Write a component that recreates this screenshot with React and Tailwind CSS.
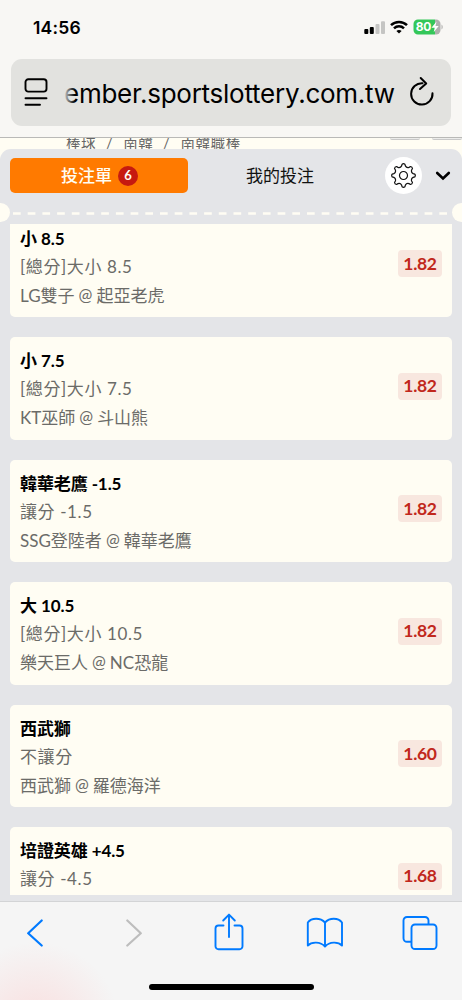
const bets = [
  { pick: '小 8.5', market: '[總分]大小 8.5', home: 'LG雙子', away: '起亞老虎', odds: '1.82' },
  { pick: '小 7.5', market: '[總分]大小 7.5', home: 'KT巫師', away: '斗山熊', odds: '1.82' },
  { pick: '韓華老鷹 -1.5', market: '讓分 -1.5', home: 'SSG登陸者', away: '韓華老鷹', odds: '1.82' },
  { pick: '大 10.5', market: '[總分]大小 10.5', home: '樂天巨人', away: 'NC恐龍', odds: '1.82' },
  { pick: '西武獅', market: '不讓分', home: '西武獅', away: '羅德海洋', odds: '1.60' },
  { pick: '培證英雄 +4.5', market: '讓分 -4.5', home: '', away: '', odds: '1.68' },
]

// 8-tooth cog outline around 0,0
function gearPath(teeth = 8) {
  const pt = (r, deg) => {
    const a = (deg * Math.PI) / 180
    return `${(r * Math.sin(a)).toFixed(2)} ${(-r * Math.cos(a)).toFixed(2)}`
  }
  const step = 360 / teeth
  let d = `M${pt(11.4, -7)}`
  for (let i = 0; i < teeth; i++) {
    const a = i * step
    d += ` Q${pt(12.3, a)} ${pt(11.4, a + 7)}`
    d += ` L${pt(9.8, a + 11)} Q${pt(8, a + step / 2)} ${pt(9.8, a + step - 11)}`
    d += ` L${pt(11.4, a + step - 7)}`
  }
  return d + 'Z'
}

function StatusBar() {
  return (
    <div className="flex h-[59px] items-start justify-between pl-[33px] pr-[18px]">
      <span className="mt-[16px] text-[17.5px] leading-[24px] font-semibold tracking-[0.2px] text-black">14:56</span>
      <div className="mt-[19px] flex items-center">
        <svg width="22" height="16" viewBox="0 0 22 16">
          <rect x="0.3" y="10" width="4" height="5" rx="1" fill="#000" />
          <rect x="5.8" y="8" width="4" height="7" rx="1" fill="#000" />
          <rect x="11.5" y="5" width="4" height="10" rx="1" fill="#c5c5c3" />
          <rect x="17" y="2.2" width="4" height="12.8" rx="1" fill="#c5c5c3" />
        </svg>
        <svg width="18" height="14" viewBox="0 0 18 14" className="ml-[4px]">
          <g fill="none" stroke="#000" strokeWidth="2.5">
            <path d="M1 5.2C5.4.9 12.6.9 17 5.2" />
            <path d="M4 8.3c2.8-2.7 7.2-2.7 10 0" />
          </g>
          <path d="M9 13.4 6.4 10.9c1.4-1.3 3.8-1.3 5.2 0z" fill="#000" />
        </svg>
        <svg width="31" height="16" viewBox="0 0 31 16" className="ml-[5px]">
          <path d="M5 .5h17v15H5A4.5 4.5 0 0 1 .5 11V5A4.5 4.5 0 0 1 5 .5z" fill="#34c759" />
          <path d="M22 .5h1A4.500 4.500 0 0 1 27.500 5v6a4.500 4.500 0 0 1-4.500 4.500h-1z" fill="#b0b0ae" />
          <path d="M28.500 5.500c1.600.8 1.600 4.200 0 5z" fill="#b0b0ae" />
          <text x="2.800" y="12.400" fontSize="12" fontWeight="700" fill="#fff" textLength="15.500">80</text>
          <path d="M23.500 2.500 18.500 8.800h3.200L20.700 13.300l5-6.300h-3.200z" fill="#fff" />
        </svg>
      </div>
    </div>
  )
}

function AddressBar() {
  return (
    <div className="mx-[11px] flex h-[67px] items-center rounded-[11px] bg-[#e2e2df]">
      <svg width="24" height="28" viewBox="0 0 24 28" fill="none" stroke="#000" strokeWidth="1.900" strokeLinecap="round" className="-mt-[1px] ml-[13px] shrink-0">
        <rect x="1.500" y="1.300" width="21" height="12.300" rx="2.800" />
        <path d="M1.500 20.200h21M1.500 26.700h14.500" />
      </svg>
      <div className="relative mt-[2px] ml-[6px] w-[346px] shrink-0 overflow-hidden pl-[10px] text-[26px] leading-[40px] tracking-[-0.25px] whitespace-nowrap text-black">
        ember.sportslottery.com.tw
        <div className="absolute inset-y-0 left-[9px] w-[12px] bg-gradient-to-r from-[#e2e2df] to-[#e2e2df]/0" />
      </div>
      <svg width="26" height="30" viewBox="0 0 26 30" fill="none" stroke="#000" strokeWidth="2" strokeLinecap="round" strokeLinejoin="round" className="-mt-[3px] ml-[9px] shrink-0">
        <path d="M13.500 7.200A10.700 10.700 0 1 0 23.500 17.200" />
        <path d="M11.700 2 17.200 7.500 11 13" />
      </svg>
    </div>
  )
}

function Breadcrumb() {
  return (
    <div className="flex h-[11px] items-start justify-between overflow-hidden bg-[#fffdf3]">
      <div className="-mt-[6px] ml-[66px] flex text-[14.500px] leading-[22px] tracking-[0.6px] text-[#666]">
        <span>棒球</span>
        <span className="w-[27px] text-center">/</span>
        <span>南韓</span>
        <span className="w-[27px] text-center">/</span>
        <span>南韓職棒</span>
      </div>
      <div className="flex gap-[12px]">
        <div className="h-[2px] w-[30px] rounded-b-[4px] border-b border-[#c9c9c9] bg-[#ececea]" />
        <div className="h-[2px] w-[30px] rounded-b-[4px] border-b border-[#c9c9c9] bg-[#ececea]" />
      </div>
    </div>
  )
}

function SlipTabs() {
  return (
    <div className="flex h-[53px] items-center pl-[10px]">
      <div className="flex h-[35px] w-[178px] items-center justify-center gap-[6px] rounded-[5px] bg-[#ff7a00] pl-[1px]">
        <span className="text-[17px] font-medium text-[#fffdf3]">投注單</span>
        <span className="flex h-[20px] w-[20px] items-center justify-center rounded-full bg-[#c61a10] text-[13px] font-bold text-[#fffdf3]">6</span>
      </div>
      <div className="flex w-[184px] justify-center text-[17px] text-[#111]">我的投注</div>
      <div className="-mt-[1px] ml-[13px] flex h-[37px] w-[37px] items-center justify-center rounded-full bg-white">
        <svg width="25" height="25" viewBox="-12.5 -12.5 25 25" fill="none" stroke="#111" strokeWidth="1.200" strokeLinejoin="round" className="-ml-[1px]">
          <path d={gearPath()} />
          <circle r="4" />
        </svg>
      </div>
      <svg width="16" height="10" viewBox="0 0 16 10" fill="none" stroke="#000" strokeWidth="2.600" strokeLinecap="round" className="mt-[1px] ml-[13px]">
        <path d="M2.200 2 8 7.500 13.800 2" />
      </svg>
    </div>
  )
}

function Perforation() {
  return (
    <div className="flex h-[22px] items-center justify-between overflow-hidden">
      <div className="-mt-[1px] -ml-[9px] h-[19px] w-[19px] shrink-0 rounded-full bg-[#fffdf3]" />
      <svg width="442" height="3" viewBox="0 0 442 3" className="shrink-0">
        <path d="M3 1.500h436" stroke="#fffdf3" strokeWidth="2.600" strokeDasharray="7.700 7" />
      </svg>
      <div className="-mt-[1px] -mr-[9px] h-[19px] w-[19px] shrink-0 rounded-full bg-[#fffdf3]" />
    </div>
  )
}

function BetCard({ bet }) {
  return (
    <div className="flex h-[102.500px] shrink-0 items-center justify-between rounded-[5px] bg-[#fffdf3] px-[10px]">
      <div className="h-[82.500px] text-[17px] whitespace-nowrap text-[#6b6b68]">
        <div className="h-[28px] leading-[28px] font-bold tracking-[-0.1px] text-black">{bet.pick}</div>
        <div className="h-[28px] leading-[28px] tracking-[0.6px]">{bet.market}</div>
        {bet.home && (
          <div className="flex h-[29.500px] items-center gap-[4px] leading-[29.500px]">
            <span>{bet.home}</span>
            <span className="text-[16.500px]">@</span>
            <span>{bet.away}</span>
          </div>
        )}
      </div>
      <div className="mb-[4px] flex h-[27px] w-[44px] items-center justify-center rounded-[4px] bg-[#f8e7df] text-[17.500px] font-bold tracking-[-0.3px] text-[#c1281c]">
        {bet.odds}
      </div>
    </div>
  )
}

function BottomBar() {
  return (
    <div className="h-[99px] border-t border-[#d3d4d6] bg-[#f5f5f5] bg-[radial-gradient(circle_at_35px_125px,#f9dede_0,#f5f5f500_85px)]">
      <div className="flex h-[62px] items-center">
        <svg width="16" height="28" viewBox="0 0 16 28" fill="none" stroke="#007aff" strokeWidth="2.200" strokeLinecap="round" strokeLinejoin="round" className="ml-[27px]">
          <path d="M14.700 1.500 1.200 14.200l13.500 12.300" />
        </svg>
        <svg width="16" height="28" viewBox="0 0 16 28" fill="none" stroke="#bdbdbd" strokeWidth="2.200" strokeLinecap="round" strokeLinejoin="round" className="ml-[83px]">
          <path d="M1.300 1.500l13.500 12.700L1.300 26.500" />
        </svg>
        <svg width="30" height="38" viewBox="0 0 30 38" fill="none" stroke="#007aff" strokeWidth="1.900" strokeLinecap="round" strokeLinejoin="round" className="-mt-[2px] ml-[72px]">
          <path d="M9.500 12.500H4.500a3 3 0 0 0-3 3v17.800a3 3 0 0 0 3 3h21a3 3 0 0 0 3-3V15.500a3 3 0 0 0-3-3h-5" />
          <path d="M15 24V2M9.200 7.500 15 1.600l5.800 5.900" />
        </svg>
        <svg width="38" height="32" viewBox="0 0 38 32" fill="none" stroke="#007aff" strokeWidth="1.900" strokeLinejoin="round" className="ml-[62px]">
          <path d="M19 5.500C14.500.500 5.500.500 1.800 5.500v23c3.700-4 12.700-4 17.200 1 4.500-5 13.200-5 17-1v-23C32.200.500 23.500.500 19 5.500z" />
          <path d="M19 5.500v24" />
        </svg>
        <svg width="36" height="34" viewBox="0 0 36 34" fill="none" stroke="#007aff" strokeWidth="1.900" className="ml-[58px]">
          <path d="M9.500 25.800H5a3.500 3.500 0 0 1-3.500-3.500V4.500A3.500 3.500 0 0 1 5 1h18a3.500 3.500 0 0 1 3.500 3.500v4" />
          <rect x="9.500" y="8.500" width="25" height="24.500" rx="3.500" />
        </svg>
      </div>
      <div className="mx-auto mt-[20px] h-[6px] w-[165px] rounded-full bg-black" />
    </div>
  )
}

export default function App() {
  return (
    <div className="flex h-[1000px] w-[462px] flex-col overflow-hidden bg-[#e4e5e8] font-['Lato','Noto_Sans_CJK_TC',sans-serif]">
      <header className="h-[138px] shrink-0 border-b border-[#b9b9b7] bg-[#f8f7f4] font-['Inter',sans-serif]">
        <StatusBar />
        <AddressBar />
      </header>
      <Breadcrumb />
      <main className="flex h-[752px] shrink-0 flex-col bg-[#fffdf3]">
        <div className="flex h-full w-full flex-col rounded-t-[11px] bg-[#e4e5e8]">
          <SlipTabs />
          <Perforation />
          <div className="mx-[10px] h-[671px] overflow-hidden">
            <div className="-mt-[9.300px] flex flex-col gap-[20px]">
              {bets.map((bet) => (
                <BetCard key={bet.pick} bet={bet} />
              ))}
            </div>
          </div>
        </div>
      </main>
      <BottomBar />
    </div>
  )
}
